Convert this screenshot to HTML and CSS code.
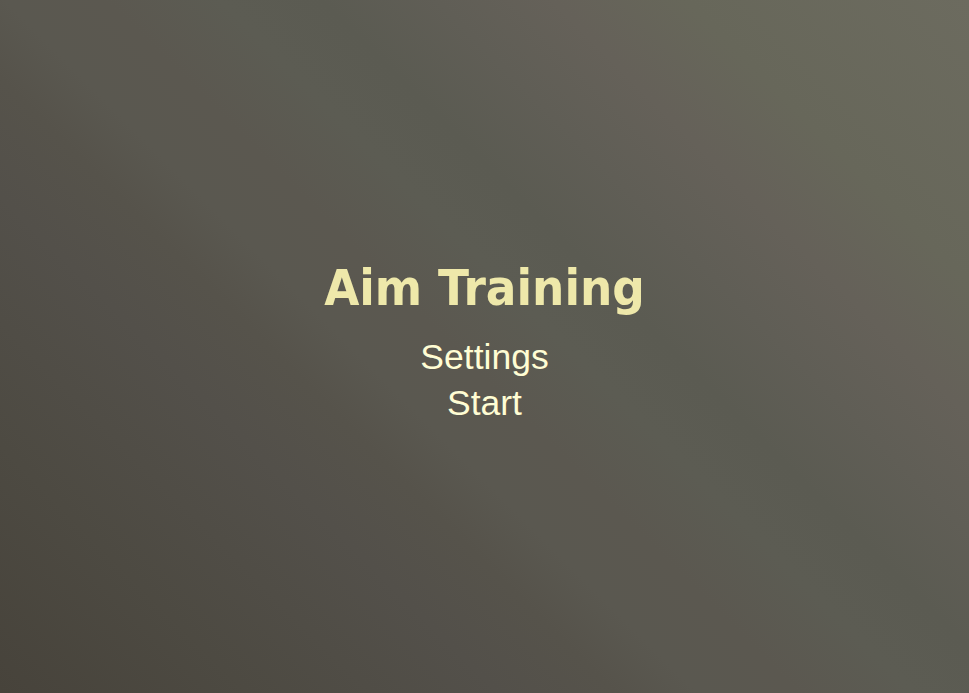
FILE: index.html
```html
<!DOCTYPE html>
<html lang="en">
<head>
<meta charset="utf-8">
<title>Aim Training</title>
<link rel="stylesheet" href="styles.css">
</head>
<body>
<main class="screen">
  <h1 class="title">Aim Training</h1>
  <nav class="menu">
    <div class="menu-item">Settings</div>
    <div class="menu-item">Start</div>
  </nav>
</main>
</body>
</html>
```
FILE: styles.css
```css
html, body {
  margin: 0;
  padding: 0;
  height: 100%;
}
body {
  background: linear-gradient(45deg,
    #47433b 0%,
    #4d4a42 15%,
    #53504a 30%,
    #56534b 37%,
    #5a5850 42%,
    #5b5850 48%,
    #5c5c53 55%,
    #5b5b52 61%,
    #605e56 68%,
    #656159 75%,
    #67675a 83%,
    #6c6b5f 100%);
  font-family: "Liberation Sans", Arial, sans-serif;
  overflow: hidden;
}
.screen {
  height: 100vh;
  box-sizing: border-box;
  padding-bottom: 9px;
  display: flex;
  flex-direction: column;
  align-items: center;
  justify-content: center;
}
.title {
  margin: 0 0 16px;
  font-family: "DejaVu Sans Condensed", "DejaVu Sans", sans-serif;
  font-stretch: condensed;
  font-size: 50.5px;
  line-height: 60px;
  font-weight: bold;
  color: #eee8aa;
}
.menu {
  display: flex;
  flex-direction: column;
  align-items: center;
}
.menu-item {
  font-size: 35.5px;
  line-height: 46px;
  color: #fffdd4;
  cursor: pointer;
}
```
